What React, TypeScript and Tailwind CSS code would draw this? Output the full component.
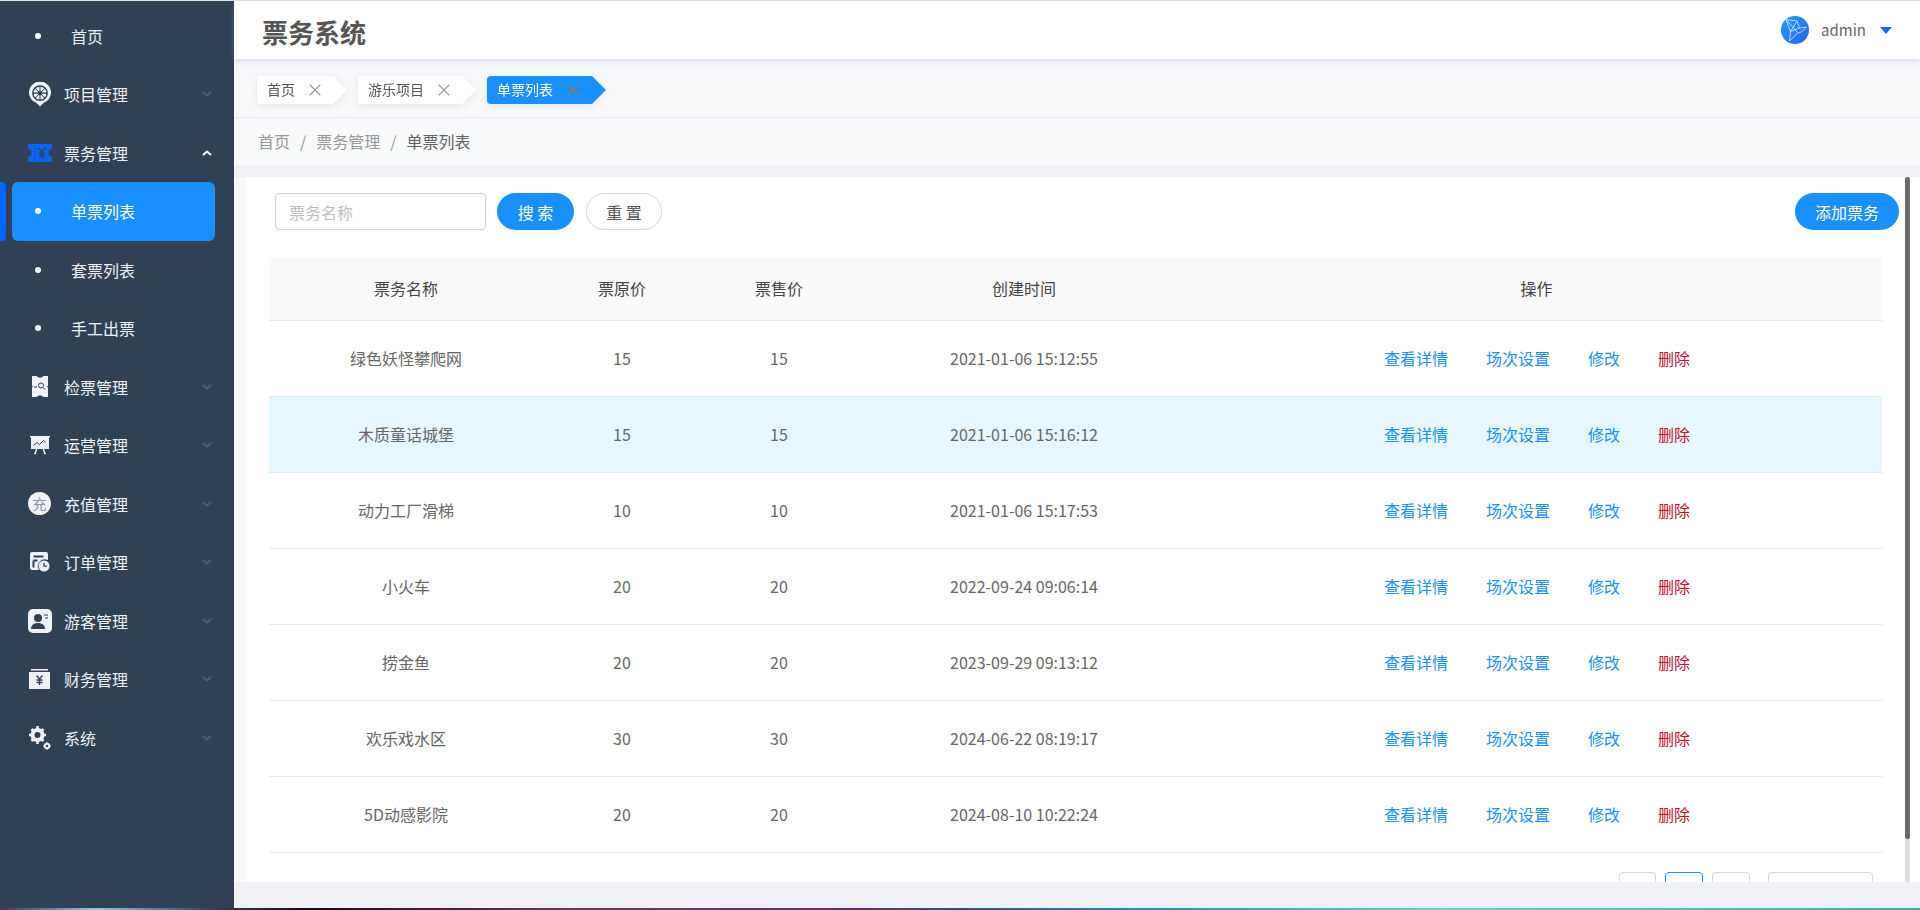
import type { ReactNode } from 'react';
import { X } from 'lucide-react';

const FerrisIcon = () => (
  <svg width="22" height="25" viewBox="0 0 24 27" fill="none">
    <path d="M12 26.500l-3.800-3.800A12 12 0 1 1 15.800 22.700z" fill="#eef1f6" />
    <circle cx="12" cy="12" r="7.800" stroke="#304156" strokeWidth="1.700" />
    <path d="M12 4.500v15M4.500 12h15M6.700 6.700l10.600 10.600M17.300 6.700L6.700 17.300" stroke="#304156" strokeWidth="1.100" />
    <circle cx="12" cy="12" r="2.200" fill="#304156" />
  </svg>
);

const TicketIcon = () => (
  <svg width="24" height="18" viewBox="0 0 24 18">
    <path d="M1 0h22a1 1 0 0 1 1 1v4.500a3.500 3.500 0 0 0 0 7V17a1 1 0 0 1-1 1H1a1 1 0 0 1-1-1v-4.500a3.500 3.500 0 0 0 0-7V1a1 1 0 0 1 1-1z" fill="#0a62f5" />
    <path d="M7 1v16" stroke="#304156" strokeWidth="0.800" strokeDasharray="1.500 1.500" />
    <path d="M10.500 4l3.500 4 3.500-4M14 8v7M11 9.500h6M11 12h6" stroke="#304156" strokeWidth="1.300" fill="none" />
  </svg>
);

const CheckIcon = () => (
  <svg width="16" height="21" viewBox="0 0 16 21">
    <path d="M0 0h4.500q3.500 3.500 7 0H16v9.500l-1 1 1 1V21h-4.500q-3.500-3.500-7 0H0v-9.500l1-1-1-1z" fill="#eef1f6" />
    <circle cx="9" cy="9.500" r="2.500" stroke="#304156" strokeWidth="1" fill="none" />
    <path d="M11 11.500l2 2M2 11h3" stroke="#304156" strokeWidth="1" />
  </svg>
);

const ChartIcon = () => (
  <svg width="20" height="19" viewBox="0 0 20 19">
    <path d="M0 0h20v1.500h-1V13h-5l2 5-1.500.5L12.500 13h-5l-2 5.500L4 18l2-5H1V1.500H0z" fill="#eef1f6" />
    <path d="M3.500 9.500l3.500-3 2.500 2 4-4 2 1.500" stroke="#304156" strokeWidth="1" fill="none" />
  </svg>
);

const ChargeIcon = () => (
  <svg width="23" height="23" viewBox="0 0 23 23">
    <circle cx="11.500" cy="11.500" r="11.500" fill="#eef1f6" />
    <text x="11.500" y="16.500" textAnchor="middle" fontSize="14" fill="#8b95a5" fontFamily="Noto Sans CJK SC">充</text>
  </svg>
);

const OrderIcon = () => (
  <svg width="20" height="20" viewBox="0 0 20 20">
    <path d="M2 0h14a2 2 0 0 1 2 2v6a7 7 0 0 0-9 10H2a2 2 0 0 1-2-2V2a2 2 0 0 1 2-2z" fill="#eef1f6" />
    <path d="M3.500 4.500h10M3.500 8.500h4M3.500 8.500v7" stroke="#304156" strokeWidth="2" />
    <circle cx="14" cy="14" r="5.500" fill="#eef1f6" />
    <path d="M14 11v3.200h3" stroke="#304156" strokeWidth="1.300" fill="none" />
  </svg>
);

const GuestIcon = () => (
  <svg width="24" height="24" viewBox="0 0 24 24">
    <rect width="24" height="24" rx="5" fill="#eef1f6" />
    <circle cx="10" cy="9" r="4" fill="#304156" />
    <path d="M3 20c0-4 3-6 7-6s7 2 7 6z" fill="#304156" />
    <path d="M16 6h4M17 9h3" stroke="#304156" strokeWidth="1" />
  </svg>
);

const FinanceIcon = () => (
  <svg width="21" height="20" viewBox="0 0 21 20">
    <rect x="2" y="0" width="17" height="1.500" fill="#eef1f6" />
    <rect x="0" y="3" width="21" height="17" fill="#eef1f6" />
    <path d="M7.500 6.500l3 3.500 3-3.500M10.500 10v6M7.500 11h6M7.500 13.500h6" stroke="#304156" strokeWidth="1.300" fill="none" />
  </svg>
);

const SystemIcon = () => (
  <svg width="22" height="24" viewBox="0 0 22 24" fill="none">
    <circle cx="8.500" cy="9" r="5" stroke="#eef1f6" strokeWidth="4" />
    <path d="M8.500 0v3M8.500 15v3M0 9h3M14 9h3M2.500 3l2 2M12.500 13l2 2M14.500 3l-2 2M4.500 13l-2 2" stroke="#eef1f6" strokeWidth="2.600" />
    <circle cx="18" cy="20" r="2.200" stroke="#eef1f6" strokeWidth="2" />
    <path d="M18 16.300v1.200M18 22.500v1.200M14.300 20h1.200M20.500 20h1.200" stroke="#eef1f6" strokeWidth="1.400" />
  </svg>
);

const Chevron = ({ up }: { up?: boolean }) => (
  <svg width="10" height="6" viewBox="0 0 10 6" fill="none" className="ml-auto mr-[22px]">
    <path d={up ? 'M1 5l4-3.500L9 5' : 'M1 1l4 3.500L9 1'} stroke={up ? '#ffffff' : '#525a66'} strokeWidth="2" />
  </svg>
);

type MenuRow = { label: string; icon?: ReactNode; open?: boolean; active?: boolean };

const menu: MenuRow[] = [
  { label: '首页' },
  { label: '项目管理', icon: <FerrisIcon /> },
  { label: '票务管理', icon: <TicketIcon />, open: true },
  { label: '单票列表', active: true },
  { label: '套票列表' },
  { label: '手工出票' },
  { label: '检票管理', icon: <CheckIcon /> },
  { label: '运营管理', icon: <ChartIcon /> },
  { label: '充值管理', icon: <ChargeIcon /> },
  { label: '订单管理', icon: <OrderIcon /> },
  { label: '游客管理', icon: <GuestIcon /> },
  { label: '财务管理', icon: <FinanceIcon /> },
  { label: '系统', icon: <SystemIcon /> },
];

const tickets = [
  { name: '绿色妖怪攀爬网', original: 15, price: 15, created: '2021-01-06 15:12:55' },
  { name: '木质童话城堡', original: 15, price: 15, created: '2021-01-06 15:16:12', hover: true },
  { name: '动力工厂滑梯', original: 10, price: 10, created: '2021-01-06 15:17:53' },
  { name: '小火车', original: 20, price: 20, created: '2022-09-24 09:06:14' },
  { name: '捞金鱼', original: 20, price: 20, created: '2023-09-29 09:13:12' },
  { name: '欢乐戏水区', original: 30, price: 30, created: '2024-06-22 08:19:17' },
  { name: '5D动感影院', original: 20, price: 20, created: '2024-08-10 10:22:24' },
];

const SideItem = ({ item }: { item: MenuRow }) => {
  if (!item.icon) {
    return (
      <div className="relative h-[58.5px] flex items-center">
        {item.active && <div className="absolute left-0 top-0 bottom-0 w-[6px] rounded-r-[4px] bg-[#0066ff]" />}
        <div className={`ml-[12px] w-[203px] h-[58.5px] flex items-center rounded-[6px] ${item.active ? 'bg-[#1890ff] text-white' : 'text-[#eef1f6]'}`}>
          <span className="ml-[23px] w-[6px] h-[6px] rounded-full bg-white" />
          <span className="ml-[30px] text-base">{item.label}</span>
        </div>
      </div>
    );
  }
  return (
    <div className="h-[58.5px] flex items-center text-[#eef1f6]">
      <span className="w-[64px] pl-[27px] pr-[12px] flex justify-center shrink-0">{item.icon}</span>
      <span className="text-base">{item.label}</span>
      <Chevron up={item.open} />
    </div>
  );
};

const Tab = ({ label, active, width }: { label: string; active?: boolean; width: string }) => (
  <div className={`${width} h-[28px] pl-[10px] flex items-center rounded-l-[4px] text-sm [clip-path:polygon(0_0,calc(100%-14px)_0,100%_50%,calc(100%-14px)_100%,0_100%)] ${active ? 'bg-[#1890ff] text-white' : 'bg-white text-[#555555]'}`}>
    <span className="pb-[2px]">{label}</span>
    <X size={20} strokeWidth={1.3} className={`ml-[10px] ${active ? 'text-[#a9764f]' : 'text-[#999999]'}`} />
  </div>
);

const AvatarIcon = () => (
  <svg width="28" height="28" viewBox="0 0 28 28" fill="none">
    <defs>
      <linearGradient id="avatar-bg" x1="0" y1="0" x2="1" y2="1">
        <stop offset="0" stopColor="#18a0ff" />
        <stop offset="1" stopColor="#2a62f0" />
      </linearGradient>
    </defs>
    <circle cx="14" cy="14" r="14" fill="url(#avatar-bg)" />
    <path d="M5 3.500l11 1.500 2.500 7 7-1-5 5-4 1-8 8 1-9.500zM5 3.500l11.500 13M9.500 15.500l9-3.500M16 5l-6.500 10.500" stroke="#dcecff" strokeWidth="0.800" />
  </svg>
);

const PillButton = ({ children, width, outline }: { children: ReactNode; width: string; outline?: boolean }) => (
  <button className={`${width} h-[37px] rounded-full text-base ${outline ? 'border border-[#d9d9d9] bg-white text-[#555555]' : 'bg-[#1890ff] text-white'}`}>
    {children}
  </button>
);

export default function App() {
  return (
    <div className="h-[910px] flex flex-col overflow-hidden bg-[#f0f1f5] font-['Noto_Sans_CJK_SC',sans-serif]">
      <div className="h-px bg-[#e2e2e2] shrink-0" />
      <div className="flex flex-1 min-h-0">
        <aside className="w-[234px] shrink-0 bg-[#304156] pt-[5.5px]">
          {menu.map((item) => (
            <SideItem key={item.label} item={item} />
          ))}
        </aside>

        <main className="flex-1 min-w-0 flex flex-col">
          <header className="relative z-10 h-[58px] shrink-0 bg-white flex items-center pl-[28px] shadow-[0_2px_6px_rgba(120,140,190,0.3)]">
            <h1 className="mt-[3px] text-[26px] font-bold text-[#555555]">票务系统</h1>
            <div className="ml-auto flex items-center">
              <AvatarIcon />
              <span className="ml-[12px] mt-[1px] text-[15px] text-[#666666]">admin</span>
              <span className="ml-[14px] mr-[28px] w-0 h-0 border-x-[6px] border-x-transparent border-t-[7px] border-t-[#0d6efd]" />
            </div>
          </header>

          <div className="h-[59px] shrink-0 bg-[#f8f9fb] border-b border-[#e9ebef] flex items-center pl-[23px] pt-[4px]">
            <div className="flex gap-[11px] drop-shadow-[0_2px_4px_rgba(0,0,0,0.08)]">
              <Tab label="首页" width="w-[90px]" />
              <Tab label="游乐项目" width="w-[118px]" />
              <Tab label="单票列表" width="w-[119px]" active />
            </div>
          </div>

          <nav className="h-[47px] shrink-0 bg-[#f8f9fb] flex items-center pl-[24px] pb-[1px] text-base text-[#999999]">
            <span>首页</span>
            <span className="mx-[10px]">/</span>
            <span>票务管理</span>
            <span className="mx-[10px]">/</span>
            <span className="text-[#606266]">单票列表</span>
          </nav>

          <div className="h-[12px] shrink-0" />

          <div className="flex flex-1 min-h-0">
            <div className="w-[12px] shrink-0 bg-[#f8f9fb]" />
            <section className="relative flex-1 min-w-0 bg-white overflow-hidden">
              <div className="flex items-center pt-[16px] pl-[29px] pr-[21px]">
                <input
                  placeholder="票务名称"
                  className="w-[211px] h-[37px] px-[13px] rounded-[4px] border border-[#d4d4d4] text-base placeholder:text-[#bfbfbf] outline-none"
                />
                <div className="ml-[11px] flex gap-[12px]">
                  <PillButton width="w-[77px]">搜 索</PillButton>
                  <PillButton width="w-[76px]" outline>重 置</PillButton>
                </div>
                <div className="ml-auto">
                  <PillButton width="w-[104px]">添加票务</PillButton>
                </div>
              </div>

              <div className="mt-[28px] ml-[23px] mr-[38px]">
                <table className="w-full table-fixed border-collapse text-base text-center">
                  <colgroup>
                    <col className="w-[274px]" />
                    <col className="w-[158px]" />
                    <col className="w-[156px]" />
                    <col className="w-[334px]" />
                    <col />
                  </colgroup>
                  <thead>
                    <tr className="h-[62px] bg-[#fafafa] border-b border-[#e8e8e8] text-[#444444]">
                      <th className="pb-[2px] font-normal rounded-tl-[4px]">票务名称</th>
                      <th className="pb-[2px] font-normal">票原价</th>
                      <th className="pb-[2px] font-normal">票售价</th>
                      <th className="pb-[2px] font-normal">创建时间</th>
                      <th className="pb-[2px] font-normal rounded-tr-[4px]">操作</th>
                    </tr>
                  </thead>
                  <tbody>
                    {tickets.map((t) => (
                      <tr key={t.name} className={`h-[76px] border-b border-[#e8e8e8] text-[#666666] ${t.hover ? 'bg-[#e6f7ff]' : ''}`}>
                        <td>{t.name}</td>
                        <td>{t.original}</td>
                        <td>{t.price}</td>
                        <td>{t.created}</td>
                        <td>
                          <div className="flex justify-center gap-[38px] pl-[1px] text-[#1890ff]">
                            <a>查看详情</a>
                            <a>场次设置</a>
                            <a>修改</a>
                            <a className="text-[#c8102e]">删除</a>
                          </div>
                        </td>
                      </tr>
                    ))}
                  </tbody>
                </table>
              </div>

              <div className="mt-[19px] pr-[47px] flex justify-end">
                <div className="w-[37px] h-[32px] rounded-[4px] border border-[#d9d9d9]" />
                <div className="ml-[9px] w-[38px] h-[32px] rounded-[4px] border border-[#1890ff]" />
                <div className="ml-[9px] w-[38px] h-[32px] rounded-[4px] border border-[#d9d9d9]" />
                <div className="ml-[18px] w-[105px] h-[32px] rounded-[4px] border border-[#d9d9d9]" />
              </div>

              <div className="absolute right-[10px] top-0 bottom-0 w-[5px] bg-[#dedede]">
                <div className="h-[662px] rounded-[3px] bg-[#6b6b6b]" />
              </div>
            </section>
          </div>

          <div className="h-[26px] shrink-0" />
        </main>
      </div>
      <div className="h-[2px] shrink-0 bg-[linear-gradient(90deg,#3a3a50_0%,#8ac8e0_5%,#34405a_11%,#1a0a20_16%,#7a3060_30%,#5a2f6a_45%,#3050a0_50%,#2090d0_60%,#60d0e0_75%,#30b0c0_100%)]" />
    </div>
  );
}
